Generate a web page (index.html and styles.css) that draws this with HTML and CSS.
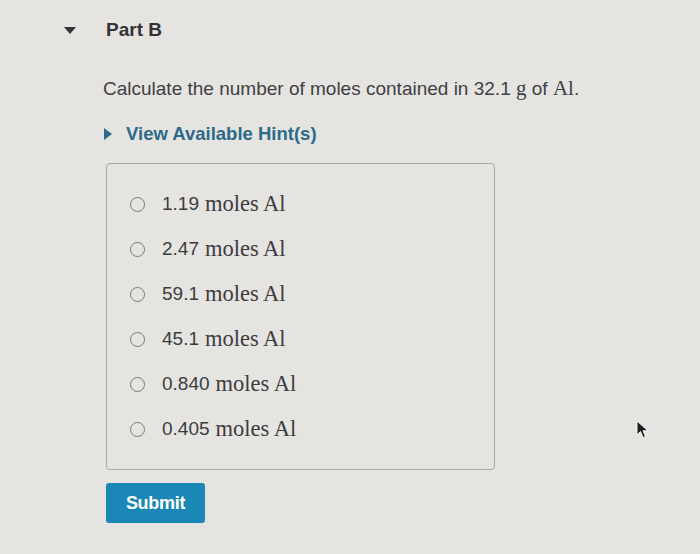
FILE: index.html
```html
<!DOCTYPE html>
<html>
<head>
<meta charset="utf-8">
<link rel="stylesheet" href="styles.css">
</head>
<body>
<div class="page">
  <div class="part-header">
    <span class="caret-down"></span>
    <span class="part-title">Part B</span>
  </div>
  <div class="content">
    <p class="question">Calculate the number of moles contained in 32.1 <span class="math">g</span> of <span class="math">Al</span>.</p>
    <div class="hint">
      <span class="caret-right"></span>
      <span class="hint-text">View Available Hint(s)</span>
    </div>
    <div class="choices">
      <label class="choice"><span class="radio"></span><span class="num">1.19</span> <span class="unit">moles Al</span></label>
      <label class="choice"><span class="radio"></span><span class="num">2.47</span> <span class="unit">moles Al</span></label>
      <label class="choice"><span class="radio"></span><span class="num">59.1</span> <span class="unit">moles Al</span></label>
      <label class="choice"><span class="radio"></span><span class="num">45.1</span> <span class="unit">moles Al</span></label>
      <label class="choice"><span class="radio"></span><span class="num">0.840</span> <span class="unit">moles Al</span></label>
      <label class="choice"><span class="radio"></span><span class="num">0.405</span> <span class="unit">moles Al</span></label>
    </div>
    <button class="submit">Submit</button>
  </div>
  <svg class="cursor" width="14" height="20" viewBox="0 0 14 20"><path d="M1 1 L1 15 L4.5 11.5 L7 17.5 L9.5 16.5 L7 10.8 L12 10.8 Z" fill="#1d1d22" stroke="#f4f4f4" stroke-width="1"/></svg>
</div>
</body>
</html>
```
FILE: styles.css
```css
html, body {
  margin: 0;
  padding: 0;
}
body {
  background: #e5e4e0;
  font-family: "Liberation Sans", Arial, sans-serif;
  color: #333336;
  width: 700px;
  height: 554px;
  overflow: hidden;
}
.page {
  position: relative;
  height: 554px;
}
.part-header {
  display: flex;
  align-items: center;
  padding: 18px 0 0 64px;
  height: 24px;
}
.caret-down {
  width: 0;
  height: 0;
  border-left: 6px solid transparent;
  border-right: 6px solid transparent;
  border-top: 7px solid #333338;
  margin-right: 30px;
}
.part-title {
  font-size: 19px;
  font-weight: bold;
  color: #333338;
}
.content {
  padding-left: 103px;
}
.question {
  margin: 34px 0 0 0;
  font-size: 19px;
  line-height: 24px;
  color: #404044;
}
.math {
  font-family: "Liberation Serif", "Times New Roman", serif;
  font-size: 21px;
}
.hint {
  display: flex;
  align-items: center;
  margin-top: 21px;
  height: 24px;
}
.caret-right {
  width: 0;
  height: 0;
  border-top: 6px solid transparent;
  border-bottom: 6px solid transparent;
  border-left: 8px solid #2d6a8a;
  margin-left: 1px;
  margin-right: 14px;
}
.hint-text {
  font-size: 18.5px;
  font-weight: bold;
  color: #2d6a8a;
}
.choices {
  margin-top: 17px;
  margin-left: 3px;
  width: 389px;
  border: 1px solid #a8a7a3;
  border-radius: 4px;
  box-sizing: border-box;
  padding: 28px 0 28px 23px;
  display: flex;
  flex-direction: column;
  gap: 21px;
}
.choice {
  display: flex;
  align-items: center;
  height: 24px;
  font-size: 19px;
  color: #3c3c40;
}
.radio {
  width: 15px;
  height: 15px;
  border: 1.5px solid #78787b;
  border-radius: 50%;
  margin-right: 17px;
  flex: none;
  box-sizing: border-box;
}
.num {
  margin-right: 6px;
}
.unit {
  font-family: "Liberation Serif", "Times New Roman", serif;
  font-size: 22.5px;
}
.submit {
  margin-top: 13px;
  margin-left: 3px;
  width: 99px;
  height: 40px;
  background: #1b87b6;
  border: none;
  border-radius: 3px;
  color: #ffffff;
  font-family: "Liberation Sans", Arial, sans-serif;
  font-size: 18px;
  font-weight: bold;
  padding: 0;
  letter-spacing: -0.3px;
}
.cursor {
  position: absolute;
  left: 636px;
  top: 420px;
}
```
